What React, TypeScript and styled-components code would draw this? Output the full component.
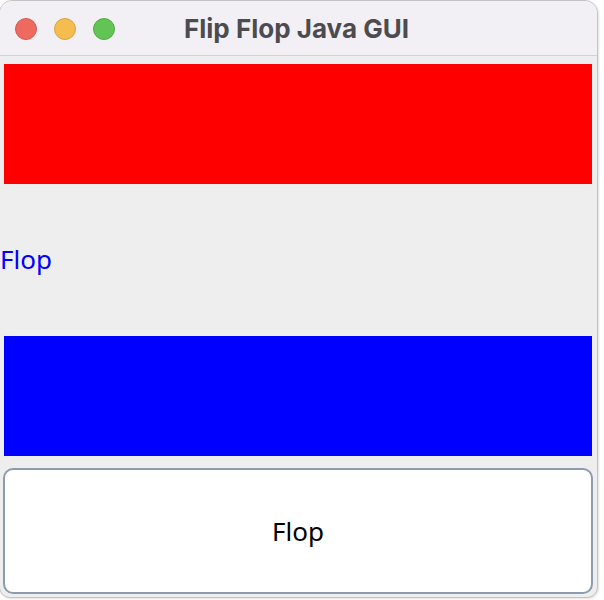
import React from 'react';
import styled, { createGlobalStyle } from 'styled-components';

const GlobalStyle = createGlobalStyle`
  html, body {
    margin: 0;
    padding: 0;
    background: #ffffff;
  }
  body {
    width: 604px;
    height: 600px;
    overflow: hidden;
  }
`;

const Window = styled.div`
  width: 599px;
  height: 598px;
  margin-left: -1px;
  box-sizing: border-box;
  border: 1px solid #c4c4c4;
  border-radius: 13px 13px 11px 11px;
  overflow: hidden;
  display: flex;
  flex-direction: column;
  background: #eeeeee;
  box-shadow: 1px 1px 2px rgba(0, 0, 0, 0.12);
`;

const TitleBar = styled.div`
  height: 54px;
  flex: none;
  position: relative;
  display: flex;
  align-items: center;
  justify-content: center;
  background: #f3f0f5;
  border-bottom: 1px solid #d3d1d5;
`;

const Lights = styled.div`
  position: absolute;
  left: 15px;
  top: 17px;
  display: flex;
  gap: 17px;
`;

const Light = styled.span<{ color: string; edge: string }>`
  width: 22px;
  height: 22px;
  border-radius: 50%;
  box-sizing: border-box;
  background: ${(props) => props.color};
  border: 1px solid ${(props) => props.edge};
`;

const Title = styled.h1`
  margin: 1px 0 0 -4px;
  font-family: Inter, Roboto, 'Liberation Sans', sans-serif;
  font-weight: 700;
  font-size: 26px;
  color: #4c4b4f;
`;

const Content = styled.div`
  flex: 1;
  display: flex;
  flex-direction: column;
  padding: 8px 5px 3px 4px;
`;

const Block = styled.div<{ color: string }>`
  height: 120px;
  flex: none;
  background: ${(props) => props.color};
`;

const LabelRow = styled.div`
  height: 152px;
  display: flex;
  align-items: center;
  margin-left: -4px;
`;

const Label = styled.span`
  font-family: 'Noto Sans', 'Open Sans', sans-serif;
  font-size: 26px;
  color: #0000ff;
  margin-top: -2px;
`;

const FlopButton = styled.button`
  margin: 12px -1px 0 -1px;
  flex: 1;
  background: #ffffff;
  border: 2px solid #8d9bae;
  border-radius: 10px;
  font-family: 'Noto Sans', 'Open Sans', sans-serif;
  font-size: 26px;
  color: #000000;
  padding: 0;
  cursor: pointer;
`;

const App = () => {
  return (
    <>
      <GlobalStyle />
      <Window>
        <TitleBar>
          <Lights>
            <Light color="#ee6a5f" edge="#d65a50" />
            <Light color="#f5bd4f" edge="#d9a23e" />
            <Light color="#61c454" edge="#52a945" />
          </Lights>
          <Title>Flip Flop Java GUI</Title>
        </TitleBar>
        <Content>
          <Block color="#ff0000" />
          <LabelRow>
            <Label>Flop</Label>
          </LabelRow>
          <Block color="#0000ff" />
          <FlopButton>Flop</FlopButton>
        </Content>
      </Window>
    </>
  );
};

export default App;
